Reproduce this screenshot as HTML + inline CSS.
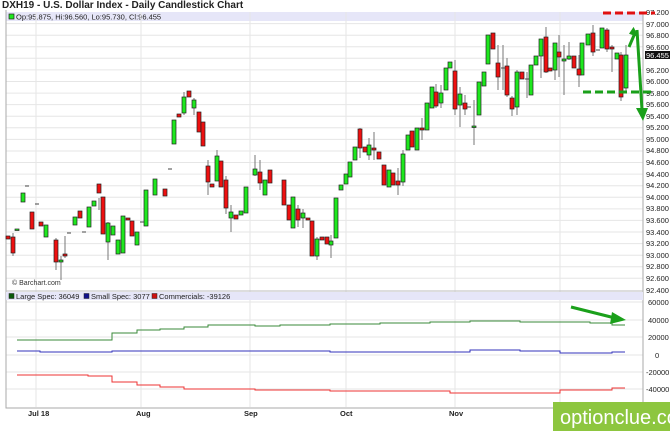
<!DOCTYPE html>
<html><head><meta charset="utf-8"><style>
body{margin:0;width:670px;height:431px;overflow:hidden;background:#fff;font-family:"Liberation Sans",sans-serif}
svg{position:absolute;left:0;top:0}
.g{fill:#1ee81e;stroke:#222;stroke-width:.7}
.r{fill:#ee1010;stroke:#222;stroke-width:.7}
.t{font-size:7.5px;fill:#222}
</style></head><body>
<svg width="670" height="431" viewBox="0 0 670 431">
<text x="2" y="8" font-size="10" font-weight="bold" fill="#222">DXH19 - U.S. Dollar Index - Daily Candlestick Chart</text>
<rect x="6" y="12" width="637" height="9" fill="#e6e6f8"/>
<rect x="9" y="14" width="5" height="5" fill="#1ee81e" stroke="#222" stroke-width=".7"/>
<text x="16" y="19.5" class="t">Op:95.875, Hi:96.560, Lo:95.730, Cl:96.455</text>
<g stroke="#e6e6e6" stroke-width="1">
<path d="M6 23.6H643M6 35.2H643M6 46.7H643M6 58.3H643M6 69.9H643M6 81.5H643M6 93.1H643M6 104.6H643M6 116.2H643M6 127.8H643M6 139.4H643M6 151H643M6 162.5H643M6 174.1H643M6 185.7H643M6 197.3H643M6 208.9H643M6 220.4H643M6 232H643M6 243.6H643M6 255.2H643M6 266.8H643M6 278.3H643"/>
<path d="M36 12V407M141 12V407M250 12V407M346 12V407M455 12V407M560 12V407"/>
<path d="M6 302H643M6 320H643M6 337H643M6 355H643M6 372H643M6 389H643"/>
</g>
<path d="M6 10V408H643M643 12V408" stroke="#aaa" fill="none"/>
<path d="M6 291H643" stroke="#bbb"/>
<rect x="6" y="292" width="637" height="8" fill="#e6e6f8"/>
<rect x="9" y="293.5" width="5" height="5" fill="#0a5a0a" stroke="#222" stroke-width=".5"/>
<text x="16" y="299" class="t">Large Spec: 36049</text>
<rect x="84" y="293.5" width="5" height="5" fill="#10108a" stroke="#222" stroke-width=".5"/>
<text x="91" y="299" class="t">Small Spec: 3077</text>
<rect x="152" y="293.5" width="5" height="5" fill="#cc1010" stroke="#222" stroke-width=".5"/>
<text x="159" y="299" class="t">Commercials: -39126</text>
<text x="12" y="285" font-size="7" fill="#333">© Barchart.com</text>
<g class="t" font-size="7.5">
<text x="646" y="15">97.200</text><text x="646" y="27">97.000</text><text x="646" y="38">96.800</text><text x="646" y="50">96.600</text><text x="646" y="73">96.200</text><text x="646" y="84">96.000</text><text x="646" y="96">95.800</text><text x="646" y="107">95.600</text><text x="646" y="119">95.400</text><text x="646" y="130">95.200</text><text x="646" y="142">95.000</text><text x="646" y="153">94.800</text><text x="646" y="165">94.600</text><text x="646" y="177">94.400</text><text x="646" y="188">94.200</text><text x="646" y="200">94.000</text><text x="646" y="211">93.800</text><text x="646" y="223">93.600</text><text x="646" y="235">93.400</text><text x="646" y="246">93.200</text><text x="646" y="258">93.000</text><text x="646" y="269">92.800</text><text x="646" y="281">92.600</text><text x="646" y="293">92.400</text>
<text x="648" y="305">60000</text><text x="648" y="323">40000</text><text x="648" y="340">20000</text><text x="655" y="358">0</text><text x="646" y="375">-20000</text><text x="646" y="392">-40000</text>
</g>
<rect x="645" y="51" width="25" height="8" fill="#111"/>
<text x="646" y="58" font-size="7.5" fill="#fff">96.455</text>
<g font-size="7.5" font-weight="bold" fill="#222">
<text x="28" y="416">Jul 18</text><text x="136" y="416">Aug</text><text x="244" y="416">Sep</text><text x="340" y="416">Oct</text><text x="449" y="416">Nov</text>
</g>
<path stroke="#777" stroke-width="1" d="M13 233V256M56 238V270M61 256V280M65 236V258M99 198V210M108 222V260M184 92V115M194 98V115M208 160V195M217 150V160M226 176V214M231 205V232M255 155V176M260 160V190M298 205V227M303 209V228M317 237V260M331 235V258M360 128V158M369 138V160M374 132V160M398 168V195M403 150V186M422 118V140M436 84V108M441 85V108M455 60V115M460 87V127M465 95V115M474 100V145M498 45V90M503 45V90M507 58V97M512 96V116M517 70V115M527 72V98M541 45V78M546 27V73M555 55V80M559 35V77M564 45V95M569 42V60M579 55V87M593 25V56M607 28V52M612 45V72M621 52V101M626 45V92"/>
<g class="g">
<rect x="15" y="229" width="4" height="1.5"/><rect x="21" y="193" width="4" height="9"/><rect x="44" y="225" width="4" height="12"/><rect x="59" y="260" width="4" height="2"/><rect x="73" y="217" width="4" height="8"/><rect x="87" y="207" width="4" height="20"/><rect x="92" y="201" width="4" height="5"/><rect x="106" y="223" width="4" height="19"/><rect x="111" y="226" width="4" height="9"/><rect x="116" y="240" width="4" height="14"/><rect x="121" y="216" width="4" height="37"/><rect x="135" y="232" width="4" height="13"/><rect x="144" y="190" width="4" height="36"/><rect x="153" y="179" width="4" height="16"/><rect x="172" y="120" width="4" height="24"/><rect x="182" y="97" width="4" height="16"/><rect x="192" y="100" width="4" height="8"/><rect x="215" y="156" width="4" height="25"/><rect x="229" y="212" width="4" height="6"/><rect x="239" y="211" width="4" height="4"/><rect x="244" y="187" width="4" height="26"/><rect x="253" y="169" width="4" height="6"/><rect x="263" y="180" width="4" height="15"/>
<rect x="291" y="197" width="4" height="31"/><rect x="301" y="213" width="4" height="5"/><rect x="315" y="239" width="4" height="17"/><rect x="329" y="241" width="4" height="4"/><rect x="334" y="198" width="4" height="40"/><rect x="339" y="185" width="4" height="5"/><rect x="344" y="174" width="4" height="10"/><rect x="348" y="162" width="4" height="15"/><rect x="353" y="147" width="4" height="13"/><rect x="367" y="145" width="4" height="10"/><rect x="387" y="170" width="4" height="17"/><rect x="401" y="154" width="4" height="28"/><rect x="406" y="135" width="4" height="15"/><rect x="415" y="128" width="4" height="22"/><rect x="425" y="103" width="4" height="27"/><rect x="430" y="87" width="4" height="21"/><rect x="439" y="93" width="4" height="10"/><rect x="444" y="68" width="4" height="22"/><rect x="448" y="62" width="4" height="6"/><rect x="458" y="94" width="4" height="11"/><rect x="472" y="126" width="4" height="1.5"/><rect x="477" y="82" width="4" height="33"/><rect x="482" y="72" width="4" height="14"/><rect x="486" y="35" width="4" height="29"/><rect x="515" y="72" width="4" height="35"/><rect x="529" y="65" width="4" height="30"/><rect x="534" y="56" width="4" height="9"/><rect x="539" y="39" width="4" height="17"/><rect x="553" y="43" width="4" height="27"/><rect x="562" y="59" width="4" height="2"/><rect x="567" y="56" width="4" height="3"/><rect x="580" y="43" width="4" height="32"/><rect x="586" y="34" width="4" height="11"/><rect x="600" y="28" width="4" height="20"/><rect x="615" y="53" width="4" height="6"/><rect x="624" y="55" width="4" height="33"/>
</g>
<g class="r">
<rect x="6" y="236" width="4" height="3"/><rect x="11" y="237" width="4" height="16"/><rect x="30" y="212" width="4" height="17"/><rect x="39" y="222" width="4" height="4"/><rect x="54" y="240" width="4" height="22"/><rect x="63" y="254" width="4" height="2"/><rect x="78" y="211" width="4" height="7"/><rect x="97" y="184" width="4" height="9"/><rect x="101" y="197" width="4" height="37"/><rect x="126" y="218" width="4" height="2"/><rect x="130" y="221" width="4" height="15"/><rect x="163" y="189" width="4" height="7"/><rect x="177" y="114" width="4" height="3"/><rect x="187" y="91" width="4" height="6"/><rect x="197" y="112" width="4" height="20"/><rect x="201" y="122" width="4" height="24"/><rect x="206" y="166" width="4" height="16"/><rect x="210" y="184" width="4" height="3"/><rect x="219" y="161" width="4" height="26"/><rect x="224" y="180" width="4" height="28"/><rect x="234" y="215" width="4" height="4"/><rect x="258" y="172" width="4" height="11"/><rect x="268" y="170" width="4" height="13"/>
<rect x="282" y="180" width="4" height="25"/><rect x="287" y="205" width="4" height="15"/><rect x="296" y="209" width="4" height="11"/><rect x="306" y="218" width="4" height="2"/><rect x="310" y="221" width="4" height="35"/><rect x="320" y="237" width="4" height="3"/><rect x="325" y="237" width="4" height="7"/><rect x="358" y="129" width="4" height="19"/><rect x="363" y="147" width="4" height="5"/><rect x="372" y="148" width="4" height="2"/><rect x="377" y="152" width="4" height="7"/><rect x="382" y="165" width="4" height="20"/><rect x="391" y="173" width="4" height="12"/><rect x="396" y="181" width="4" height="4"/><rect x="410" y="131" width="4" height="16"/><rect x="420" y="128" width="4" height="2"/><rect x="434" y="92" width="4" height="14"/><rect x="453" y="71" width="4" height="38"/><rect x="463" y="103" width="4" height="6"/><rect x="491" y="33" width="4" height="16"/><rect x="496" y="63" width="4" height="14"/><rect x="505" y="66" width="4" height="29"/><rect x="510" y="98" width="4" height="11"/><rect x="520" y="72" width="4" height="7"/><rect x="544" y="37" width="4" height="35"/><rect x="548" y="68" width="4" height="3"/><rect x="557" y="52" width="4" height="5"/><rect x="572" y="56" width="4" height="12"/><rect x="577" y="69" width="4" height="6"/><rect x="591" y="33" width="4" height="19"/><rect x="605" y="30" width="4" height="19"/><rect x="610" y="47" width="4" height="2"/><rect x="619" y="55" width="4" height="42"/>
</g>
<path d="M501 68H505M525 79H529M467 107H471M596 50H600M140 222H144M168 169H172M67 233H71M35 204H39M25 186H29M82 232H86" stroke="#444"/>
<path d="M603 13H655" stroke="#e01010" stroke-width="3" stroke-dasharray="8,4"/>
<path d="M583 92H655" stroke="#1aa01a" stroke-width="3" stroke-dasharray="8,4"/>
<path d="M629 47L635 33" stroke="#1aa01a" stroke-width="3"/>
<path d="M632 28L640 36L630 36Z" fill="#1aa01a" transform="rotate(20 636 32)"/>
<path d="M637 30L642 110" stroke="#1aa01a" stroke-width="3"/>
<path d="M636 108L648 108L643 121Z" fill="#1aa01a"/>
<path d="M17 340H112V333H137V330H160V329H184V327H208V325H232V325H255V326H280V325H330V324H380V323H430V322H470V321H520V322H560V322H590V323H612V325H625" stroke="#3a8a3a" fill="none"/>
<path d="M17 351H40V352H112V351H330V352H470V350H520V351H560V353H612V352H625" stroke="#3333bb" fill="none"/>
<path d="M17 375H88V376H112V382H137V385H160V387H184V389H208V389H255V390H330V391H450V393H560V390H612V388H625" stroke="#ee3333" fill="none"/>
<path d="M571 307L615 318" stroke="#1aa01a" stroke-width="3"/>
<path d="M612 312L626 320L610 324Z" fill="#1aa01a"/>
<rect x="553" y="402" width="117" height="29" fill="#8dc63f"/>
<text x="560" y="424" font-size="20" fill="#fff">optionclue.com</text>
</svg>
</body></html>
